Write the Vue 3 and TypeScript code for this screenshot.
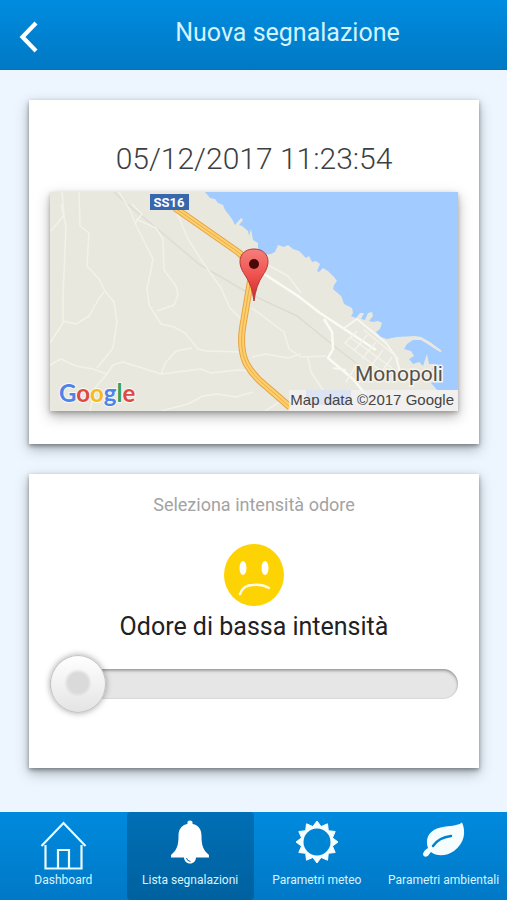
<script setup lang="ts">
import { computed, ref } from 'vue'

type IconName = 'home' | 'bell' | 'sun' | 'leaf'

interface Tab {
  icon: IconName
  label: string
}

const tabs: Tab[] = [
  { icon: 'home', label: 'Dashboard' },
  { icon: 'bell', label: 'Lista segnalazioni' },
  { icon: 'sun', label: 'Parametri meteo' },
  { icon: 'leaf', label: 'Parametri ambientali' },
]

const activeTab = ref<IconName>('bell')
const intensity = ref(0)
const levels = ['Odore di bassa intensità', 'Odore di media intensità', 'Odore di alta intensità']
const levelLabel = computed(() => levels[intensity.value])

// Twelve-pointed ring drawn around the sun's disc.
const sunPoints = Array.from({ length: 24 }, (_, i) => {
  const radius = i % 2 === 0 ? 21 : 16
  const angle = (i * Math.PI) / 12 - Math.PI / 2
  return `${(22 + radius * Math.cos(angle)).toFixed(2)},${(22 + radius * Math.sin(angle)).toFixed(2)}`
}).join(' ')
</script>

<template>
  <div class="screen">
    <header class="topbar">
      <button class="back" type="button" aria-label="Indietro">
        <svg width="20" height="32" viewBox="0 0 20 32" aria-hidden="true">
          <path d="M17 2 3.500 16 17 30" fill="none" stroke="#fff" stroke-width="4.200" />
        </svg>
      </button>
      <h1 class="title">Nuova segnalazione</h1>
    </header>

    <main class="content">
      <section class="card place">
        <time class="stamp" datetime="2017-12-05T11:23:54">05/12/2017 11:23:54</time>
        <svg class="map" viewBox="0 0 408 219" role="img" aria-label="Monopoli">
          <defs>
            <linearGradient id="pin" x1="0" y1="0" x2="0" y2="1">
              <stop offset="0" stop-color="#f4807c" />
              <stop offset="0.500" stop-color="#f0524e" />
              <stop offset="1" stop-color="#c92a2c" />
            </linearGradient>
          </defs>
          <rect width="408" height="219" fill="#e9e8de" />
          <path
            d="M155 0 160 6 165 7 168 11 173 13 175 18 179 23 182 27 185 33 191 26 193 28 189 33 192 34 198 39 199 44 201 37 203 48 208 51 208 57 213 63 221 62 225 60 228 53 234 55 238 53 243 57 249 59 253 63 256 66 259 64 262 70 266 69 270 72 267 79 269 80 273 76 278 79 284 85 287 89 284 93 283 97 291 104 292 106 294 112 302 116 303 121 301 124 306 126 310 121 314 121 311 127 315 128 318 121 322 120 323 124 319 129 323 130 328 129 332 131 330 137 326 140 331 145 337 147 347 145 365 144 371 145 380 150 392 159 390 160 379 153 371 148 363 148 357 152 354 157 361 159 364 164 359 167 363 172 369 170 373 174 377 162 379 172 384 172 382 178 390 176 393 180 389 187 381 191 387 198 408 198 408 0Z"
            fill="#a2cbff"
          />
          <g fill="none" stroke="#dddcd3" stroke-width="1.500">
            <path d="M64 0 76 11 110 39 150 73 200 102 247 124 289 158 310 174" />
          </g>
          <g fill="none" stroke="#f3f2e8" stroke-width="1.500" stroke-linejoin="round">
            <path d="M12 0 14 23 1 39M11 12 16 34 14 82 13 103 13 131 0 151M29 0 30 34 39 41 37 74 49 87 55 99 64 110 67 130 63 156 47 176" />
            <path d="M13 129 26 132 39 124 48 108 54 100M69 0 80 18 85 31 103 67 100 83 97 96 99 113 104 121 111 132 124 135 135 141 148 157 156 159 191 160" />
            <path d="M85 31 92 22 82 12M86 27 106 36 113 47 114 78 126 94 128 103 124 113 107 119M127 21 138 47 152 69 171 96 180 116 192 128" />
            <path d="M0 173 11 167 26 174 43 177 57 182 63 173 73 170 89 175 111 182 151 177 161 181 188 178 203 179M111 182 116 170 126 159 142 156" />
            <path d="M57 182 45 196 40 219M111 219 138 212 153 204 167 202 186 205 203 200M216 72 238 84 251 101M202 116 234 140 239 157 251 165 276 164" />
            <path d="M202 165 216 162 238 166 251 162M258 165 261 180 273 198M215 219 231 209 268 217" />
          </g>
          <g fill="none" stroke="#fbfaf5" stroke-width="2.500" stroke-linejoin="round">
            <path d="M208 78 248 104 270 121 308 146 326 158M274 127 282 140 283 157 278 166 303 187 316 203" />
          </g>
          <g fill="none" stroke="#f8f7f1" stroke-width="2" stroke-linejoin="round">
            <path d="M293 137 307 127 336 151 346 165 350 180M283 176 296 178" />
          </g>
          <g fill="none" stroke="#f3f2eb" stroke-width="1.500">
            <path d="M307 139 295 151 330 178M317 143 304 159M326 150 312 167M333 158 321 174M342 165 331 181M300 145 342 176M314 138 349 167M296 190 307 172" />
          </g>
          <g fill="none" stroke-linejoin="round">
            <path d="M125 16 188 60Q203 72 201 86L193 133Q189 155 196 171 203 184 217 195L240 215" stroke="#e2a344" stroke-width="7" />
            <path d="M125 16 188 60Q203 72 201 86L193 133Q189 155 196 171 203 184 217 195L240 215" stroke="#ffcf6b" stroke-width="5" />
            <path d="M125 16 188 60Q203 72 201 86L193 133Q189 155 196 171 203 184 217 195L240 215" stroke="#e8ad50" stroke-width="1" />
          </g>
          <rect x="100" y="2" width="39" height="16" fill="#3867ad" />
          <text class="road" x="119" y="15" text-anchor="middle">SS16</text>
          <path d="M204 109Q202 93 195 83C185 69 191 57 204 57S223 69 213 83Q206 93 204 109Z" fill="url(#pin)" stroke="#ba3633" stroke-width="1" />
          <circle cx="204" cy="72" r="5" fill="#4a0708" />
          <text class="town" x="305" y="189">Monopoli</text>
          <rect x="256" y="198" width="45" height="15" fill="#a3bce6" />
          <rect x="239" y="198" width="169" height="21" fill="#f3f4f5" fill-opacity="0.700" />
          <text class="credit" x="404" y="213" text-anchor="end">Map data ©2017 Google</text>
          <text class="brand" x="9" y="210"><tspan fill="#4f83e8">G</tspan><tspan fill="#df4a40">o</tspan><tspan fill="#f5bb16">o</tspan><tspan fill="#4f83e8">g</tspan><tspan fill="#36a257">l</tspan><tspan fill="#df4a40">e</tspan></text>
        </svg>
      </section>

      <section class="card rating">
        <label class="hint" for="intensity">Seleziona intensità odore</label>
        <svg class="face" width="62" height="64" viewBox="0 0 62 64" aria-hidden="true">
          <ellipse cx="31" cy="32" rx="30" ry="31" fill="#fdd303" />
          <ellipse cx="20" cy="25" rx="3.500" ry="7" fill="#fff" />
          <ellipse cx="42" cy="25" rx="3.500" ry="7" fill="#fff" />
          <path d="M17 51Q20 42 30 42 39 41 46 45" fill="none" stroke="#fffbe0" stroke-width="2.500" stroke-linecap="round" />
        </svg>
        <output class="level" for="intensity">{{ levelLabel }}</output>
        <input id="intensity" v-model.number="intensity" class="slider" type="range" min="0" max="2" step="1" />
      </section>
    </main>

    <nav class="tabs">
      <button
        v-for="tab in tabs"
        :key="tab.icon"
        type="button"
        class="tab"
        :class="{ active: tab.icon === activeTab }"
        @click="activeTab = tab.icon"
      >
        <svg v-if="tab.icon === 'home'" class="icon" viewBox="0 0 48 52" aria-hidden="true">
          <g fill="none" stroke="#e9fbff" stroke-width="2.200">
            <path d="M2.500 27 24.500 4 46.500 27M6.500 26V49.500H42.500V26M19 49V31H30V49" />
          </g>
        </svg>
        <svg v-else-if="tab.icon === 'bell'" class="icon" viewBox="0 0 48 52" aria-hidden="true">
          <path d="M24 1.500C26 1.500 27 3 26.500 5 33 6 35.500 11 35.500 17 35.500 26 37 31 43 36V38.500H5V36C11 31 12.500 26 12.500 17 12.500 11 15 6 21.500 5 21 3 22 1.500 24 1.500Z" fill="#fff" />
          <path d="M18 38H30C30 42 27.500 44.500 24 44.500S18 42 18 38Z" fill="#fff" />
          <path d="M20.500 39Q21 42 24.500 42.500" fill="none" stroke="#0064aa" stroke-width="1" />
        </svg>
        <svg v-else-if="tab.icon === 'sun'" class="icon" viewBox="-2 -1 48 52" aria-hidden="true">
          <polygon :points="sunPoints" fill="#f6fdff" stroke="#f6fdff" stroke-width="1" stroke-linejoin="round" />
          <circle cx="22" cy="22" r="13.500" fill="#0084d4" />
        </svg>
        <svg v-else class="icon" viewBox="0 0 48 52" aria-hidden="true">
          <path d="M42 3.500C36 8 27 6 17 9.500 8 13 5 21 8 29 5 31 3 33 3 35.500 4 38.500 7 38.500 9 35.500L11 33C17 38 27 37 34 32 45 24 46 12 42 3.500Z" fill="#f6fdff" />
          <path d="M13 27C17 21 23 18 31 17" fill="none" stroke="#0082d0" stroke-width="2.500" stroke-linecap="round" />
        </svg>
        <span class="tab-label">{{ tab.label }}</span>
      </button>
    </nav>
  </div>
</template>

<style>
body {
  margin: 0;
}
</style>

<style scoped>
.screen {
  display: flex;
  flex-direction: column;
  min-height: 100vh;
  background: #edf6fe;
  font-family: Roboto, "Liberation Sans", sans-serif;
}

.topbar {
  display: grid;
  grid-template-columns: 58px 1fr;
  align-items: center;
  height: 70px;
  box-sizing: border-box;
  background: linear-gradient(#008ce0, #0079c4);
  border-bottom: 1px solid #0873b4;
}

.back {
  display: flex;
  justify-content: center;
  padding: 4px 0 0;
  border: 0;
  background: none;
  cursor: pointer;
}

.title {
  margin: 0;
  padding: 0 0 4px 10px;
  color: #d2f3ff;
  font-size: 25px;
  font-weight: 400;
  line-height: 32px;
  text-align: center;
}

.content {
  display: flex;
  flex: 1;
  flex-direction: column;
  gap: 30px;
  padding: 30px 28px 43px 29px;
}

.card {
  display: flex;
  flex-direction: column;
  align-items: center;
  padding: 0 21px;
  background: #fff;
  box-shadow: 0 5px 12px rgba(60, 70, 75, 0.4), 0 2px 4px rgba(60, 60, 65, 0.5);
}

.place {
  gap: 13px;
  padding-top: 39px;
  padding-bottom: 33px;
}

.stamp {
  color: #3c3f44;
  font-size: 30px;
  font-weight: 300;
  line-height: 40px;
}

.map {
  display: block;
  width: 100%;
  box-shadow: 0 5px 12px rgba(60, 60, 60, 0.4), 0 2px 4px rgba(60, 60, 60, 0.3);
}

.road {
  fill: #fff;
  font-size: 13px;
  font-weight: 700;
}

.town {
  fill: #55514a;
  stroke: #f5f4ee;
  stroke-width: 3px;
  paint-order: stroke;
  font-size: 21px;
}

.credit {
  fill: #444;
  font-family: "Liberation Sans", Arial, sans-serif;
  font-size: 15px;
}

.brand {
  stroke: #f8f8f4;
  stroke-width: 2px;
  paint-order: stroke;
  font-family: Lato, sans-serif;
  font-size: 24px;
  font-weight: 700;
}

.rating {
  padding-top: 19px;
  padding-bottom: 55px;
}

.hint {
  color: #a3a3a3;
  font-size: 18px;
  line-height: 24px;
}

.face {
  margin-top: 26px;
}

.level {
  margin-top: 4px;
  color: #202124;
  font-size: 25px;
  line-height: 32px;
}

.slider {
  width: 100%;
  height: 58px;
  margin: 12px 0 0;
  appearance: none;
  background: none;
  cursor: pointer;
}

.slider::-webkit-slider-runnable-track {
  height: 30px;
  border-radius: 15px;
  background: #e6e6e6;
  box-shadow: inset 0 2px 3px rgba(0, 0, 0, 0.3), inset 0 0 2px rgba(0, 0, 0, 0.15);
}

.slider::-webkit-slider-thumb {
  width: 56px;
  height: 58px;
  margin-top: -14px;
  appearance: none;
  border: 1px solid #c4c4c4;
  border-radius: 50%;
  background:
    radial-gradient(circle at 50% 48%, #dadada 10px, transparent 14px),
    linear-gradient(#fff, #e4e4e4);
  box-shadow: 0 0 6px rgba(0, 0, 0, 0.35);
}

.tabs {
  display: grid;
  grid-template-columns: repeat(4, minmax(0, 1fr));
  height: 88px;
  background: linear-gradient(#008ade, #0079c6);
}

.tab {
  display: flex;
  flex-direction: column;
  align-items: center;
  padding: 7px 0 0;
  border: 0;
  border-radius: 4px;
  background: none;
  color: #d8f3ff;
  font-family: inherit;
  cursor: pointer;
}

.tab.active {
  background: linear-gradient(#006fb5, #00619f);
}

.icon {
  width: 48px;
  height: 52px;
}

.tab-label {
  font-size: 12px;
  line-height: 18px;
  white-space: nowrap;
}
</style>
